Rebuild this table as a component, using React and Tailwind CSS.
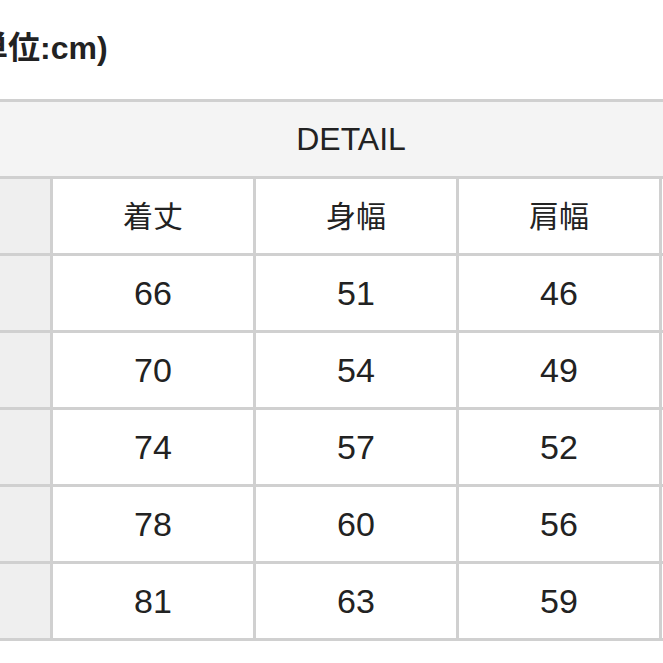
const cols = ["着丈", "身幅", "肩幅"];
const rows = [
  [66, 51, 46],
  [70, 54, 49],
  [74, 57, 52],
  [78, 60, 56],
  [81, 63, 59],
];

const font = { fontFamily: '"Liberation Sans", "Noto Sans CJK JP", sans-serif' };

export default function App() {
  return (
    <div className="w-[663px] h-[663px] bg-white overflow-hidden text-[#222]" style={font}>
      {/* unit caption, cut off at the left edge */}
      <div className="h-[99px] pt-[27px]">
        <p className="-ml-[56px] whitespace-nowrap text-[32px] leading-[42px] font-semibold">
          （単位:cm)
        </p>
      </div>

      <div className="grid w-[700px] grid-cols-[50px_200px_200px_200px_40px] auto-rows-[74px] gap-[3px] border-y-[3px] border-[#d0d0d0] bg-[#d0d0d0]">
        <div className="col-span-5 flex items-center justify-center bg-[#f4f4f4] text-[32px]">
          DETAIL
        </div>

        <div className="bg-[#efefef]" />
        {cols.map((c) => (
          <div key={c} className="flex items-center justify-center bg-white text-[30px]">
            {c}
          </div>
        ))}
        <div className="bg-white" />

        {rows.map((r, i) => (
          <div key={i} className="contents">
            <div className="bg-[#efefef]" />
            {r.map((v, j) => (
              <div key={j} className="flex items-center justify-center bg-white text-[34px]">
                {v}
              </div>
            ))}
            <div className="bg-white" />
          </div>
        ))}
      </div>
    </div>
  );
}
